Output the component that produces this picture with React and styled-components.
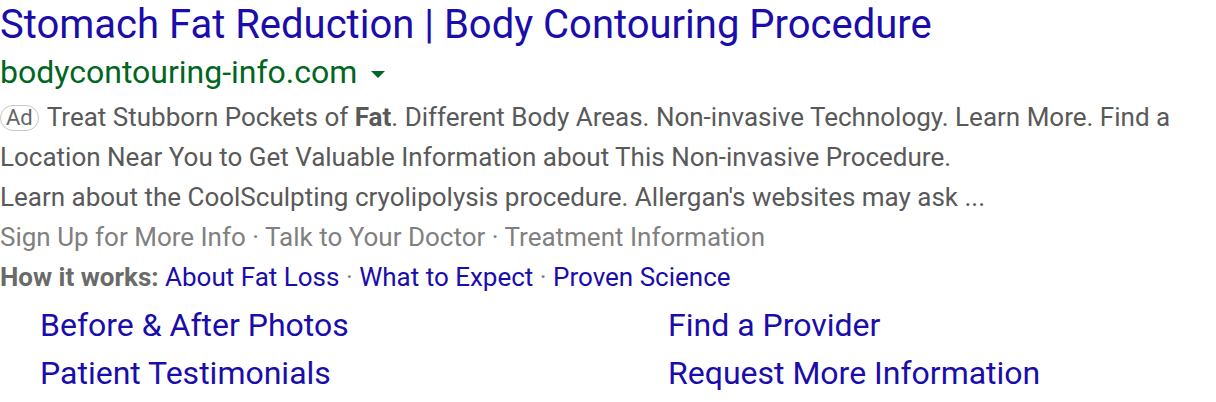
import React from "react";
import styled, { createGlobalStyle } from "styled-components";

const Global = createGlobalStyle`
  body {
    margin: 0;
    background: #fff;
    font-family: Roboto, "Liberation Sans", Arial, sans-serif;
  }
`;

const Ad = styled.div`
  width: 1216px;
`;

const Title = styled.a`
  display: block;
  font-size: 40px;
  line-height: 48px;
  padding-top: 1px;
  margin-bottom: -1px;
  color: #1a0dab;
  text-decoration: none;
  white-space: nowrap;
`;

const UrlRow = styled.div`
  display: flex;
  align-items: center;
  font-size: 32px;
  line-height: 48px;
  color: #006621;
  margin-bottom: 1px;
`;

const Caret = styled.span`
  display: inline-block;
  width: 0;
  height: 0;
  margin-left: 14px;
  margin-top: 4px;
  border-left: 7px solid transparent;
  border-right: 7px solid transparent;
  border-top: 7px solid #006621;
`;

const Line = styled.div`
  font-size: 26px;
  line-height: 40px;
  color: ${(p) => p.$color || "#595959"};
`;

const Badge = styled.span`
  display: inline-block;
  box-sizing: border-box;
  height: 26px;
  padding: 0 5px;
  margin-right: 8px;
  border: 1px solid #c6c6c6;
  border-radius: 13px;
  font-size: 22px;
  line-height: 24px;
  color: #666;
  vertical-align: 1px;
`;

const Link = styled.a`
  color: #1a0dab;
  text-decoration: none;
`;

const Dot = styled.span`
  color: #808080;
`;

const Label = styled.b`
  color: #6a6a6a;
  font-weight: 700;
`;

const Sitelinks = styled.div`
  display: grid;
  grid-template-columns: 628px 1fr;
  padding-left: 40px;
  padding-top: 4px;
`;

const Sitelink = styled.a`
  font-size: 32px;
  line-height: 48px;
  color: #1a0dab;
  text-decoration: none;
  white-space: nowrap;
`;

export default function App() {
  return (
    <Ad>
      <Global />
      <Title href="#">Stomach Fat Reduction | Body Contouring Procedure</Title>
      <UrlRow>
        bodycontouring-info.com
        <Caret />
      </UrlRow>
      <Line>
        <Badge>Ad</Badge>
        Treat Stubborn Pockets of <b>Fat</b>. Different Body Areas. Non-invasive Technology. Learn More. Find a
      </Line>
      <Line>Location Near You to Get Valuable Information about This Non-invasive Procedure.</Line>
      <Line>Learn about the CoolSculpting cryolipolysis procedure. Allergan's websites may ask ...</Line>
      <Line $color="#808080">
        Sign Up for More Info · Talk to Your Doctor · Treatment Information
      </Line>
      <Line>
        <Label>How it works:</Label> <Link href="#">About Fat Loss</Link> <Dot>·</Dot>{" "}
        <Link href="#">What to Expect</Link> <Dot>·</Dot> <Link href="#">Proven Science</Link>
      </Line>
      <Sitelinks>
        <Sitelink href="#">Before &amp; After Photos</Sitelink>
        <Sitelink href="#">Find a Provider</Sitelink>
        <Sitelink href="#">Patient Testimonials</Sitelink>
        <Sitelink href="#">Request More Information</Sitelink>
      </Sitelinks>
    </Ad>
  );
}
